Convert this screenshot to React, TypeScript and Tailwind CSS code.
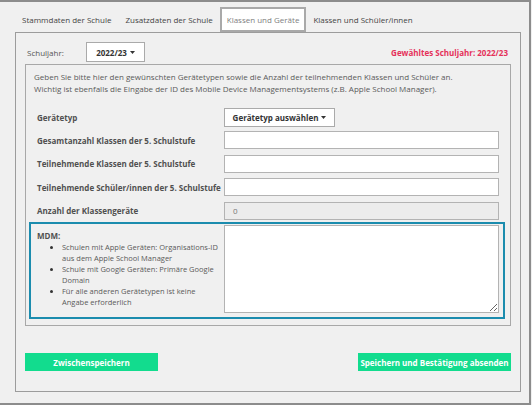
import React from "react"

function Caret() {
  return (
    <svg width="5" height="3" viewBox="0 0 5 3" className="ml-[3px] inline-block">
      <path d="M0 0h5L2.5 3z" fill="#333" />
    </svg>
  )
}

const tabs = [
  { label: "Stammdaten der Schule", active: false },
  { label: "Zusatzdaten der Schule", active: false },
  { label: "Klassen und Geräte", active: true },
  { label: "Klassen und Schüler/innen", active: false },
]

const rows = [
  "Gesamtanzahl Klassen der 5. Schulstufe",
  "Teilnehmende Klassen der 5. Schulstufe",
  "Teilnehmende Schüler/innen der 5. Schulstufe",
]

const mdmHints = [
  ["Schulen mit Apple Geräten: Organisations-ID", "aus dem Apple School Manager"],
  ["Schule mit Google Geräten: Primäre Google", "Domain"],
  ["Für alle anderen Gerätetypen ist keine", "Angabe erforderlich"],
]

export default function App() {
  return (
    <div className="w-[532px] h-[405px] bg-[#f0f0f0] font-['Open_Sans',sans-serif] text-[8px] leading-[11px] text-[#555]">
      <div className="w-[531px] h-[405px] border-t-2 border-r-2 border-b-2 border-[#8c8c8c] pt-[5px] pl-[15px]">
        {/* Tabs */}
        <div className="flex h-[25px]">
          {tabs.map((t) => (
            <div
              key={t.label}
              className={
                t.active
                  ? "flex items-center px-[5px] border-2 border-[#a9a9a9] bg-white text-[#808080]"
                  : "flex items-center px-[7px] text-[#444]"
              }
            >
              {t.label}
            </div>
          ))}
        </div>

        {/* Panel */}
        <div className="w-[506px] h-[360px] border border-[#9c9c9c] px-[9px] pt-[9px]">
          <div className="flex items-center h-[20px] pl-[2px] pr-[3px]">
            <span className="w-[59px] text-[#555]">Schuljahr:</span>
            <div className="w-[59px] h-[20px] bg-white border border-[#aaa] flex items-center justify-center font-bold text-[#333]">
              2022/23
              <Caret />
            </div>
            <span className="ml-auto font-bold text-[#e5315a]">Gewähltes Schuljahr: 2022/23</span>
          </div>

          {/* Inner box */}
          <div className="mt-[2px] h-[262px] border border-[#a8a8a8] pl-[3px] pr-[5px] pt-[6px]">
            <p className="pl-[5px] leading-[12px] text-[#5a5a5a]">
              Geben Sie bitte hier den gewünschten Gerätetypen sowie die Anzahl der teilnehmenden Klassen und Schüler an.
              <br />
              Wichtig ist ebenfalls die Eingabe der ID des Mobile Device Managementsystems (z.B. Apple School Manager).
            </p>

            <div className="pl-[8px] pr-[6px]">
              <div className="flex items-center mt-[13px] h-[19px]">
                <span className="w-[187px] font-bold text-[#505050]">Gerätetyp</span>
                <div className="w-[111px] h-[19px] bg-white border border-[#aaa] flex items-center justify-center font-bold text-[#333]">
                  Gerätetyp auswählen
                  <Caret />
                </div>
              </div>

              {rows.map((r, i) => (
                <div key={r} className={`flex items-center h-[18px] ${i === 0 ? "mt-[4px]" : "mt-[5.5px]"}`}>
                  <span className="w-[187px] font-bold text-[#505050]">{r}</span>
                  <input className="flex-1 h-[18px] bg-white border border-[#b3b3b3] outline-none px-[8px]" />
                </div>
              ))}

              <div className="flex items-center h-[18px] mt-[5.5px]">
                <span className="w-[187px] font-bold text-[#505050]">Anzahl der Klassengeräte</span>
                <div className="flex-1 h-[18px] bg-[#ececec] border border-[#b3b3b3] px-[8px] flex items-center text-[#777]">
                  0
                </div>
              </div>
            </div>

            {/* MDM */}
            <div className="mt-[2.5px] h-[97px] border-2 border-[#1b8cae] pl-[6px] pr-[4px] pt-[1px] flex">
              <div className="w-[187px] shrink-0 pt-[5px]">
                <div className="font-bold text-[#505050]">MDM:</div>
                <ul className="mt-[1px] pl-[25px] list-disc text-[7.5px] leading-[10.5px] text-[#5a5a5a] marker:text-[#333] whitespace-nowrap">
                  {mdmHints.map(([a, b], i) => (
                    <li key={a} className={i > 0 ? "mt-[1px]" : ""}>
                      {a}
                      <br />
                      {b}
                    </li>
                  ))}
                </ul>
              </div>
              <textarea className="flex-1 h-[88px] bg-white border border-[#b3b3b3] outline-none resize" />
            </div>
          </div>

          {/* Buttons */}
          <div className="flex justify-between mt-[27px]">
            <button className="w-[133px] h-[18px] bg-[#12dc8e] text-white font-bold">Zwischenspeichern</button>
            <button className="w-[153px] h-[18px] bg-[#12dc8e] text-white font-bold">Speichern und Bestätigung absenden</button>
          </div>
        </div>
      </div>
    </div>
  )
}
